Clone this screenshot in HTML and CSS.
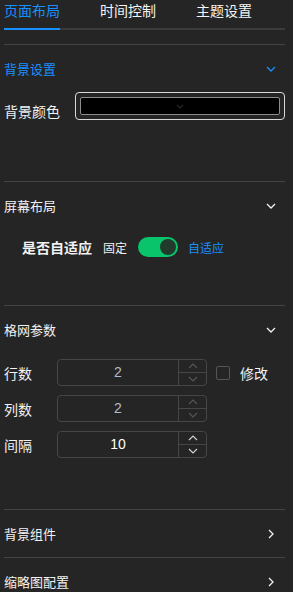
FILE: index.html
```html
<!DOCTYPE html>
<html lang="zh-CN">
<head>
    <meta charset="UTF-8">
    <meta name="viewport" content="width=device-width, initial-scale=1.0">
    <title>布局设置</title>
    <link rel="stylesheet" href="styles.css">
</head>
<body>
    <div class="panel">
        <div class="tabs">
            <div class="tab active">页面布局</div>
            <div class="tab">时间控制</div>
            <div class="tab">主题设置</div>
        </div>

        <div class="section section-bg">
            <div class="section-head active">
                <span>背景设置</span>
                <svg class="chev" width="10" height="6" viewBox="0 0 10 6"><path d="M1 1l4 4 4-4" fill="none" stroke="currentColor" stroke-width="1.3"/></svg>
            </div>
            <div class="color-row">
                <label class="color-label">背景颜色</label>
                <div class="color-picker">
                    <div class="color-inner">
                        <svg width="8" height="5" viewBox="0 0 8 5"><path d="M1 1l3 3 3-3" fill="none" stroke="#262626" stroke-width="1.2"/></svg>
                    </div>
                </div>
            </div>
        </div>

        <div class="section section-screen">
            <div class="section-head">
                <span>屏幕布局</span>
                <svg class="chev" width="10" height="6" viewBox="0 0 10 6"><path d="M1 1l4 4 4-4" fill="none" stroke="currentColor" stroke-width="1.3"/></svg>
            </div>
            <div class="switch-row">
                <span class="switch-label">是否自适应</span>
                <span class="switch-text">固定</span>
                <span class="switch on"><span class="knob"></span></span>
                <span class="switch-text active">自适应</span>
            </div>
        </div>

        <div class="section section-grid">
            <div class="section-head">
                <span>格网参数</span>
                <svg class="chev" width="10" height="6" viewBox="0 0 10 6"><path d="M1 1l4 4 4-4" fill="none" stroke="currentColor" stroke-width="1.3"/></svg>
            </div>
            <div class="grid-rows">
                <div class="grid-row">
                    <label class="grid-label">行数</label>
                    <div class="num-input disabled">
                        <span class="num-value">2</span>
                        <span class="num-ctrl">
                            <span class="num-btn"><svg width="10" height="6" viewBox="0 0 10 6"><path d="M1 5l4-4 4 4" fill="none" stroke="currentColor" stroke-width="1.2"/></svg></span>
                            <span class="num-btn"><svg width="10" height="6" viewBox="0 0 10 6"><path d="M1 1l4 4 4-4" fill="none" stroke="currentColor" stroke-width="1.2"/></svg></span>
                        </span>
                    </div>
                    <span class="checkbox"></span>
                    <span class="check-text">修改</span>
                </div>
                <div class="grid-row">
                    <label class="grid-label">列数</label>
                    <div class="num-input disabled">
                        <span class="num-value">2</span>
                        <span class="num-ctrl">
                            <span class="num-btn"><svg width="10" height="6" viewBox="0 0 10 6"><path d="M1 5l4-4 4 4" fill="none" stroke="currentColor" stroke-width="1.2"/></svg></span>
                            <span class="num-btn"><svg width="10" height="6" viewBox="0 0 10 6"><path d="M1 1l4 4 4-4" fill="none" stroke="currentColor" stroke-width="1.2"/></svg></span>
                        </span>
                    </div>
                </div>
                <div class="grid-row">
                    <label class="grid-label">间隔</label>
                    <div class="num-input">
                        <span class="num-value">10</span>
                        <span class="num-ctrl">
                            <span class="num-btn"><svg width="10" height="6" viewBox="0 0 10 6"><path d="M1 5l4-4 4 4" fill="none" stroke="currentColor" stroke-width="1.2"/></svg></span>
                            <span class="num-btn"><svg width="10" height="6" viewBox="0 0 10 6"><path d="M1 1l4 4 4-4" fill="none" stroke="currentColor" stroke-width="1.2"/></svg></span>
                        </span>
                    </div>
                </div>
            </div>
        </div>

        <div class="section">
            <div class="section-head">
                <span>背景组件</span>
                <svg class="chev-r" width="6" height="10" viewBox="0 0 6 10"><path d="M1 1l4 4-4 4" fill="none" stroke="currentColor" stroke-width="1.3"/></svg>
            </div>
        </div>

        <div class="section">
            <div class="section-head">
                <span>缩略图配置</span>
                <svg class="chev-r" width="6" height="10" viewBox="0 0 6 10"><path d="M1 1l4 4-4 4" fill="none" stroke="currentColor" stroke-width="1.3"/></svg>
            </div>
        </div>
    </div>
</body>
</html>
```

FILE: styles.css
```css
body {
    margin: 0;
    background-color: #252525;
    color: #f2f2f2;
    font-family: "Noto Sans CJK SC", "Noto Sans", sans-serif;
    overflow: hidden;
}

.panel {
    padding: 0 8px 0 4px;
}

.tabs {
    display: flex;
    gap: 40px;
    border-bottom: 2px solid #3b3b3b;
    margin-bottom: 14px;
}

.tab {
    font-size: 14px;
    line-height: 20px;
    padding-bottom: 8px;
    margin-bottom: -2px;
    border-bottom: 2px solid transparent;
    color: #f5f5f5;
}

.tab.active {
    color: #1890ff;
    border-bottom-color: #1890ff;
}

.section {
    border-top: 1px solid #444;
}

.section-head {
    display: flex;
    align-items: center;
    justify-content: space-between;
    height: 47px;
    font-size: 13px;
    padding-right: 9px;
}

.section-head.active {
    color: #1890ff;
}

.chev-r {
    margin-right: 2px;
}

/* background */
.section-bg {
    padding-bottom: 60px;
}

.color-row {
    display: flex;
    gap: 15px;
}

.color-label {
    font-size: 14px;
    line-height: 20px;
    padding-top: 9px;
}

.color-picker {
    flex: 1;
    height: 28px;
    box-sizing: border-box;
    border: 1px solid #d9d9d9;
    border-radius: 4px;
    padding: 4px;
}

.color-inner {
    height: 100%;
    box-sizing: border-box;
    background-color: #000;
    border: 1px solid #8c8c8c;
    border-radius: 2px;
    display: flex;
    align-items: center;
    justify-content: center;
}

/* screen layout */
.section-screen {
    padding-bottom: 48px;
}

.switch-row {
    display: flex;
    align-items: center;
    height: 20px;
    margin-top: 8px;
    padding-left: 18px;
}

.switch-label {
    font-size: 14px;
    font-weight: bold;
    margin-right: 11px;
}

.switch-text {
    font-size: 12px;
    margin-right: 11px;
}

.switch-text.active {
    color: #1890ff;
}

.switch {
    width: 40px;
    height: 20px;
    border-radius: 10px;
    background-color: #0ac46c;
    display: flex;
    align-items: center;
    justify-content: flex-end;
    padding-right: 2px;
    box-sizing: border-box;
    margin-right: 10px;
}

.knob {
    width: 16px;
    height: 16px;
    border-radius: 50%;
    background-color: #213a2c;
}

/* grid */
.section-grid {
    padding-bottom: 51px;
}

.grid-rows {
    display: flex;
    flex-direction: column;
    gap: 9px;
    margin-top: 6px;
}

.grid-row {
    display: flex;
    align-items: center;
}

.grid-label {
    width: 53px;
    font-size: 14px;
}

.num-input {
    width: 150px;
    height: 27px;
    box-sizing: border-box;
    border: 1px solid #464646;
    border-radius: 4px;
    display: flex;
}

.num-value {
    flex: 1;
    text-align: center;
    font-family: "Liberation Sans", Arial, sans-serif;
    font-size: 14px;
    line-height: 25px;
    color: #fff;
}

.num-ctrl {
    width: 27px;
    border-left: 1px solid #464646;
    display: flex;
    flex-direction: column;
    color: #d0d0d0;
}

.num-btn {
    flex: 1;
    display: flex;
    align-items: center;
    justify-content: center;
}

.num-btn + .num-btn {
    border-top: 1px solid #464646;
}

.num-input.disabled .num-value {
    color: #b4bcc6;
}

.num-input.disabled .num-ctrl {
    color: #555;
}

.checkbox {
    width: 14px;
    height: 14px;
    box-sizing: border-box;
    border: 1px solid #555;
    border-radius: 2px;
    margin-left: 9px;
}

.check-text {
    font-size: 14px;
    margin-left: 10px;
}
```
